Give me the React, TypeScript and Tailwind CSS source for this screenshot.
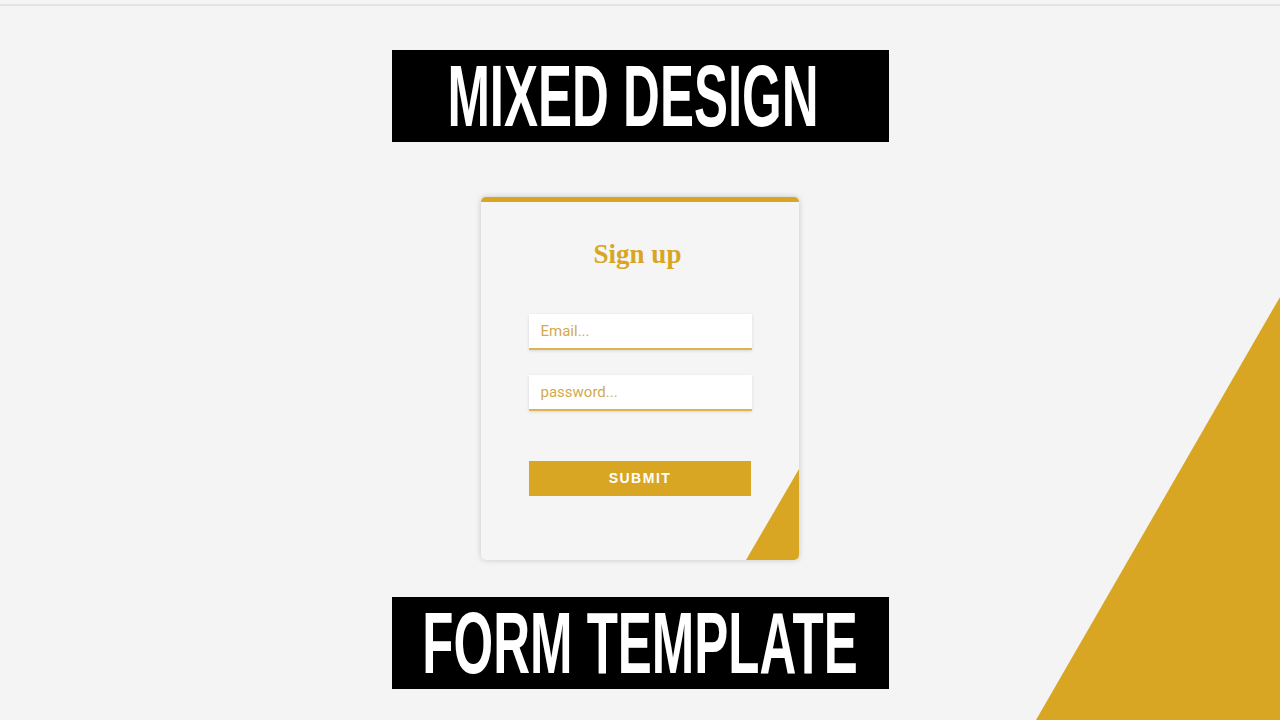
import React from 'react';

const GOLD = '#d9a623';

function Banner({ text, shift }: { text: string; shift: string }) {
  return (
    <div className="flex h-[92px] w-[497px] items-center justify-center bg-black">
      <span
        className={`inline-block whitespace-nowrap font-['Liberation_Sans',Arial,sans-serif] text-[51px] font-bold leading-none text-white scale-y-[1.69] ${shift}`}
      >
        {text}
      </span>
    </div>
  );
}

function SignUpCard() {
  return (
    <div className="relative mt-[55px] flex h-[363px] w-[318px] flex-col items-center overflow-hidden rounded-[5px] border-t-[5px] border-[#d9a623] bg-[#f5f5f5] shadow-[0_0_6px_rgba(0,0,0,0.18)]">
      <h1 className="pt-[36px] pr-[5px] font-['Liberation_Serif','Times_New_Roman',serif] text-[27px] font-bold leading-[32px] text-[#d9a623]">
        Sign up
      </h1>

      <input
        type="email"
        placeholder="Email..."
        className="mt-[44px] h-[36px] w-[223px] border-b-2 border-[#dcb450] bg-white px-[12px] font-['Roboto',sans-serif] text-[15px] text-[#c99a2e] shadow-[0_1px_3px_rgba(0,0,0,0.12)] outline-none placeholder:text-[#d4aa4c]"
      />
      <input
        type="password"
        placeholder="password..."
        className="mt-[25px] h-[36px] w-[223px] border-b-2 border-[#dcb450] bg-white px-[12px] font-['Roboto',sans-serif] text-[15px] text-[#c99a2e] shadow-[0_1px_3px_rgba(0,0,0,0.12)] outline-none placeholder:text-[#d4aa4c]"
      />

      <button
        type="button"
        className="mt-[50px] h-[35px] w-[222px] bg-[#d9a623] font-['Liberation_Sans',Arial,sans-serif] text-[14px] font-bold tracking-[1.5px] text-white"
      >
        SUBMIT
      </button>

      {/* corner wedge */}
      <svg className="absolute bottom-0 right-0" width="53" height="91" viewBox="0 0 53 91">
        <polygon points="53,0 53,91 0,91" fill={GOLD} />
      </svg>
    </div>
  );
}

export default function App() {
  return (
    <div className="relative flex h-[720px] w-full flex-col items-center overflow-hidden bg-[#f4f4f4]">
      {/* big background wedge */}
      <svg className="absolute bottom-0 right-0" width="244" height="423" viewBox="0 0 244 423">
        <polygon points="244,0 244,423 0,423" fill={GOLD} />
      </svg>

      <div className="mt-[4px] h-[2px] w-full bg-[#e3e3e3]" />

      <div className="relative mt-[44px]">
        <Banner text="MIXED DESIGN" shift="-translate-x-[7px]" />
      </div>

      <SignUpCard />

      <div className="relative mt-[37px]">
        <Banner text="FORM TEMPLATE" shift="translate-x-0" />
      </div>
    </div>
  );
}
